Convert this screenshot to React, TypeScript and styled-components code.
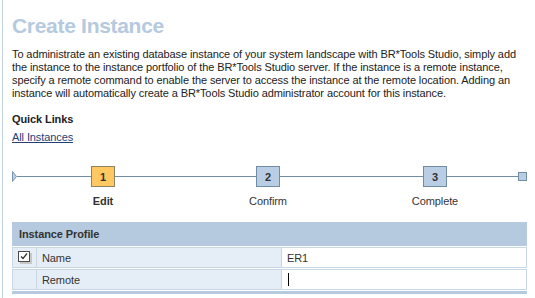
import React from "react";
import styled, { createGlobalStyle } from "styled-components";

const Global = createGlobalStyle`
  html, body { margin: 0; padding: 0; background: #ffffff; }
  body { font-family: "Liberation Sans", Arial, sans-serif; font-size: 11px; color: #222; letter-spacing: -0.1px; }
`;

const Page = styled.div`
  margin-left: 2px;
  border-left: 1px solid #c2d3e4;
  padding: 14px 8px 0 9px;
  min-height: 298px;
  box-sizing: border-box;
  display: flex;
  flex-direction: column;
`;

const Title = styled.h1`
  margin: 0;
  font-size: 21px;
  line-height: 24px;
  font-weight: bold;
  letter-spacing: -0.3px;
  color: #b5cadf;
`;

const Intro = styled.p`
  margin: 10px 0 0;
  font-size: 11px;
  line-height: 13px;
  white-space: nowrap;
  color: #222;
`;

const SectionLabel = styled.div`
  margin-top: 13px;
  font-weight: bold;
  line-height: 13px;
  color: #222;
`;

const Link = styled.a`
  margin-top: 5px;
  line-height: 13px;
  color: #23407a;
  text-decoration: underline;
  align-self: flex-start;
  cursor: pointer;
`;

const Stepper = styled.div`
  margin-top: 22px;
  display: flex;
  align-items: flex-start;
  width: 515px;
`;

const Connector = styled.div<{ $w: number }>`
  width: ${(p) => p.$w}px;
  height: 1px;
  margin-top: 10px;
  background: #6f8ea6;
  flex: none;
`;

const StartMark = styled.div`
  flex: none;
  width: 5px;
  margin-top: 5px;
  display: flex;
`;

const EndMark = styled.div`
  flex: none;
  width: 9px;
  height: 9px;
  margin-top: 6px;
  box-sizing: border-box;
  border: 1px solid #6f8ea6;
  background: #b9cee4;
`;

const Step = styled.div`
  flex: none;
  width: 24px;
  display: flex;
  flex-direction: column;
  align-items: center;
`;

const StepBox = styled.div<{ $active?: boolean }>`
  width: 24px;
  height: 21px;
  box-sizing: border-box;
  border: 1px solid ${(p) => (p.$active ? "#8c8460" : "#6f8ea6")};
  background: ${(p) => (p.$active ? "#ffc862" : "#b9cee4")};
  display: flex;
  align-items: center;
  justify-content: center;
  font-weight: bold;
  color: #333;
`;

const StepLabel = styled.div<{ $active?: boolean }>`
  margin-top: 8px;
  line-height: 13px;
  white-space: nowrap;
  font-weight: ${(p) => (p.$active ? "bold" : "normal")};
  color: #333;
`;

const Table = styled.div`
  margin-top: 14px;
  width: 515px;
  display: flex;
  flex-direction: column;
`;

const TableHeader = styled.div`
  height: 24px;
  background: #b5cade;
  display: flex;
  align-items: center;
  padding-left: 7px;
  font-weight: bold;
  color: #333;
`;

const Row = styled.div`
  display: grid;
  grid-template-columns: 25px 245px 1fr;
  margin-top: 1px;
  height: 21px;
`;

const Cell = styled.div<{ $tone: "blue" | "white" }>`
  box-sizing: border-box;
  border: 1px solid #c9d7e5;
  margin-left: -1px;
  &:first-child { margin-left: 0; }
  background: ${(p) => (p.$tone === "blue" ? "#e5eef6" : "#ffffff")};
  display: flex;
  align-items: center;
  padding-left: 5px;
  color: #333;
`;

const BottomBar = styled.div`
  margin-top: 1px;
  height: 3px;
  background: #b5cade;
`;

const Caret = styled.span`
  display: inline-block;
  width: 1px;
  height: 13px;
  background: #000;
  margin-left: 1px;
`;

const CheckIcon = () => (
  <svg width="14" height="13" viewBox="0 0 14 13">
    <rect x="2" y="2" width="12" height="11" fill="#c8c8c8" />
    <rect x="0.5" y="0.5" width="11" height="10" fill="#ffffff" stroke="#4a4a4a" />
    <path d="M3 5.5 L5 7.5 L9 2.5" fill="none" stroke="#333" strokeWidth="1.3" />
  </svg>
);

const Triangle = () => (
  <svg width="5" height="11" viewBox="0 0 5 11">
    <path d="M0.5 0.5 L4.5 5.5 L0.5 10.5 Z" fill="#b9cee4" stroke="#7c98b2" />
  </svg>
);

export default function App() {
  return (
    <>
      <Global />
      <Page>
        <Title>Create Instance</Title>
        <Intro>
          To administrate an existing database instance of your system landscape with BR*Tools Studio, simply add
          <br />
          the instance to the instance portfolio of the BR*Tools Studio server. If the instance is a remote instance,
          <br />
          specify a remote command to enable the server to access the instance at the remote location. Adding an
          <br />
          instance will automatically create a BR*Tools Studio administrator account for this instance.
        </Intro>
        <SectionLabel>Quick Links</SectionLabel>
        <Link>All Instances</Link>
        <Stepper>
          <StartMark>
            <Triangle />
          </StartMark>
          <Connector $w={74} />
          <Step>
            <StepBox $active>1</StepBox>
            <StepLabel $active>Edit</StepLabel>
          </Step>
          <Connector $w={141} />
          <Step>
            <StepBox>2</StepBox>
            <StepLabel>Confirm</StepLabel>
          </Step>
          <Connector $w={143} />
          <Step>
            <StepBox>3</StepBox>
            <StepLabel>Complete</StepLabel>
          </Step>
          <Connector $w={71} />
          <EndMark />
        </Stepper>
        <Table>
          <TableHeader>Instance Profile</TableHeader>
          <Row>
            <Cell $tone="blue">
              <CheckIcon />
            </Cell>
            <Cell $tone="blue">Name</Cell>
            <Cell $tone="white">ER1</Cell>
          </Row>
          <Row>
            <Cell $tone="blue" />
            <Cell $tone="blue">Remote</Cell>
            <Cell $tone="white">
              <Caret />
            </Cell>
          </Row>
          <BottomBar />
        </Table>
      </Page>
    </>
  );
}
